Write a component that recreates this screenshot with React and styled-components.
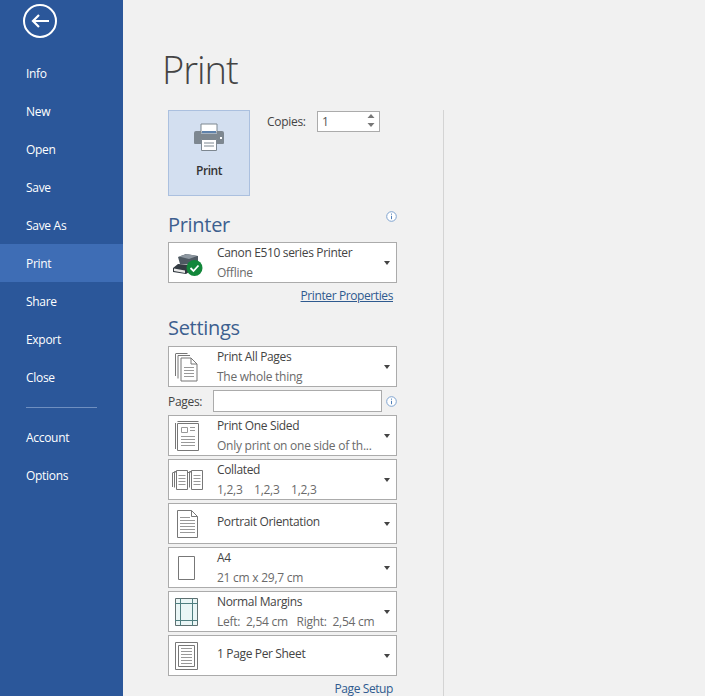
import React from "react";
import styled, { createGlobalStyle } from "styled-components";

const Global = createGlobalStyle`
  html, body { margin: 0; padding: 0; background: #f1f1f1; }
  body { font-family: "Open Sans", "Noto Sans", "Liberation Sans", sans-serif; font-size: 12px; color: #444; }
  * { box-sizing: border-box; }
`;

const Page = styled.div`
  display: flex;
  width: 705px;
  height: 696px;
  overflow: hidden;
  background: #f1f1f1;
`;
const Sidebar = styled.nav`
  width: 123px;
  flex: none;
  background: #2b579a;
  display: flex;
  flex-direction: column;
  padding-top: 3px;
`;
const Back = styled.button`
  width: 36px;
  height: 36px;
  margin: 0 0 15px 22px;
  padding: 0;
  border: 0;
  background: none;
  display: block;
`;
const NavItem = styled.div`
  height: 38px;
  flex: none;
  display: flex;
  align-items: center;
  padding-left: 26px;
  color: #fff;
  font-size: 12px;
  letter-spacing: -0.3px;
  background: ${p => (p.$active ? "#3e6db5" : "transparent")};
`;
const NavRule = styled.hr`
  width: 71px;
  height: 1px;
  border: 0;
  margin: 11px 0 10px 26px;
  background: #6f8fc0;
`;
const Main = styled.main`
  flex: 1;
  padding: 41px 0 0 45px;
  min-width: 0;
`;
const Title = styled.h1`
  margin: 0 0 12px -6px;
  font-family: "Open Sans", sans-serif;
  font-weight: 300;
  font-size: 38px;
  line-height: 57px;
  height: 57px;
  letter-spacing: -1px;
  color: #444;
`;
const Column = styled.div`
  width: 276px;
  height: 590px;
  border-right: 1px solid #d4d4d4;
  padding-right: 46px;
`;
const TopRow = styled.div`
  display: flex;
  align-items: flex-start;
  height: 86px;
`;
const PrintButton = styled.button`
  width: 82px;
  height: 86px;
  flex: none;
  border: 1px solid #abc0df;
  background: #d3dff0;
  display: flex;
  flex-direction: column;
  align-items: center;
  padding: 12px 0 0;
  font: 600 12px "Open Sans", sans-serif;
  letter-spacing: -0.45px;
  color: #333;
  gap: 11px;
`;
const CopiesLabel = styled.label`
  margin: 4px 0 0 17px;
  width: 50px;
  line-height: 16px;
  letter-spacing: -0.3px;
  color: #444;
`;
const Spin = styled.div`
  width: 63px;
  height: 21px;
  margin-top: 1px;
  border: 1px solid #ababab;
  background: #fff;
  display: flex;
  align-items: center;
  justify-content: space-between;
  padding: 0 1px 0 4px;
  color: #555;
`;
const Heading = styled.div`
  display: flex;
  justify-content: space-between;
  align-items: flex-start;
  height: ${p => p.$h}px;
  margin-top: ${p => p.$top}px;
`;
const HeadingText = styled.h2`
  margin: 0;
  font-weight: 400;
  font-size: 20px;
  line-height: 30px;
  letter-spacing: -0.3px;
  color: #3d5f8f;
`;
const Select = styled.div`
  height: 41px;
  margin-bottom: 3px;
  border: 1px solid #ababab;
  background: #fff;
  display: flex;
  align-items: center;
`;
const IconSlot = styled.div`
  width: 48px;
  height: 39px;
  flex: none;
  display: flex;
  align-items: center;
  padding-left: ${p => p.$x}px;
  padding-top: ${p => p.$y || 0}px;
`;
const SelectText = styled.div`
  flex: 1;
  min-width: 0;
  display: flex;
  flex-direction: column;
  gap: 3px;
  margin-top: ${p => (p.$single ? -4 : 0)}px;
`;
const Line = styled.div`
  line-height: 17px;
  white-space: pre;
  letter-spacing: ${p => (p.$sub ? "-0.25px" : "-0.35px")};
  color: ${p => (p.$sub ? "#6a6a6a" : "#444")};
`;
const Caret = styled.span`
  width: 0;
  height: 0;
  flex: none;
  margin-right: 6px;
  border-left: 3.5px solid transparent;
  border-right: 3.5px solid transparent;
  border-top: 4px solid #444;
`;
const LinkRow = styled.div`
  display: flex;
  justify-content: flex-end;
  padding: 1px 4px 0 0;
  height: 18px;
  line-height: 18px;
  letter-spacing: -0.4px;
  color: #2f5a8f;
  text-decoration: ${p => (p.$under ? "underline" : "none")};
`;
const PagesRow = styled.div`
  display: flex;
  align-items: center;
  height: 22px;
  margin-bottom: 3px;
`;
const PagesLabel = styled.label`
  width: 45px;
  flex: none;
  letter-spacing: -0.3px;
  color: #444;
`;
const PagesInput = styled.div`
  width: 169px;
  height: 22px;
  border: 1px solid #ababab;
  background: #fff;
`;
const InfoWrap = styled.span`
  margin-left: 4px;
  margin-top: ${p => p.$top || 0}px;
  display: flex;
`;

const Info = () => (
  <svg width="11" height="11" viewBox="0 0 11 11">
    <circle cx="5.5" cy="5.5" r="4.8" fill="#fff" stroke="#7fa3cf" />
    <path d="M5.5 2.6v1.1M5.5 4.8v3.4" stroke="#4f7fb8" strokeWidth="1" fill="none" />
  </svg>
);
const BackIcon = () => (
  <svg width="36" height="36" viewBox="0 0 36 36">
    <circle cx="18" cy="18" r="16" fill="none" stroke="#fff" strokeWidth="2" />
    <path d="M27 18H11M17 12l-6 6 6 6" fill="none" stroke="#fff" strokeWidth="2.2" />
  </svg>
);
const Printer = () => (
  <svg width="30" height="28" viewBox="0 0 30 28">
    <path d="M7 1h16v9H7z" fill="#fff" stroke="#7d8790" />
    <path d="M8 8h14v2H8z" fill="#5f82ab" />
    <path d="M2 8h5v3h16V8h5a2 2 0 012 2v10a1 1 0 01-1 1H23v-4H7v4H1a1 1 0 01-1-1V10a2 2 0 012-2z" fill="#7d8790" />
    <path d="M7.5 16.5h15v11h-15z" fill="#fff" stroke="#7d8790" />
    <path d="M10 20h10M10 23h10" stroke="#7d8790" />
    <path d="M26 14h2v2h-2z" fill="#fff" />
  </svg>
);
const PrinterCheck = () => (
  <svg width="32" height="26" viewBox="0 0 32 26">
    <path d="M6 4l8-3 12 2v5l-6 3H8z" fill="#4f5a63" />
    <path d="M7 3.5l8-2.500 10 2-8 3z" fill="#8d97a0" />
    <path d="M1 15l5-4 14 1v5l-6 4-13-2z" fill="#333b42" />
    <path d="M2 15.500l11 2v2.500l-11-2z" fill="#e8e8e8" />
    <circle cx="22.500" cy="15" r="8" fill="#12873a" />
    <path d="M18.500 15l3 3 5-5.500" fill="none" stroke="#fff" strokeWidth="1.800" />
  </svg>
);
const doc = "#777";
const Lines = ({ x, y, w, n, step = 3 }) => (
  <path d={Array.from({ length: n }, (_, i) => `M${x} ${y + i * step + 0.5}h${w}`).join("")} stroke="#999" fill="none" />
);
const AllPages = () => (
  <svg width="24" height="29" viewBox="0 0 24 29" fill="none">
    <path d="M.5 1v22M.5.500h12M3 2.500v23M3 2.500h12" stroke={doc} />
    <path d="M6 5.500h10l6 6v17h-16z" transform="translate(0 -.5)" fill="#fff" stroke={doc} />
    <path d="M16 5v6h6" stroke={doc} />
    <Lines x={9} y={14} w={10} n={4} />
  </svg>
);
const OneSided = () => (
  <svg width="24" height="30" viewBox="0 0 24 30" fill="none">
    <path d="M.5 2v26M2.500 .5h21" stroke={doc} />
    <path d="M2.500 2.500h21v27h-21z" fill="#fff" stroke={doc} />
    <path d="M6.500 6.500h6v5h-6z" stroke="#999" />
    <Lines x={15} y={6} w={5} n={2} />
    <Lines x={6} y={15} w={14} n={4} />
  </svg>
);
const CollatedOne = ({ x }) => (
  <g transform={`translate(${x} 0)`}>
    <path d="M.5 3v14M.5 2.500h3M2.500 1.500v16M2.500 1.500h3" stroke={doc} />
    <path d="M4.500 .5h11v19h-11z" fill="#fff" stroke={doc} />
    <Lines x={6.500} y={5} w={7} n={4} />
  </g>
);
const Collated = () => (
  <svg width="32" height="20" viewBox="0 0 32 20" fill="none">
    <CollatedOne x={0} />
    <CollatedOne x={15} />
  </svg>
);
const Portrait = () => (
  <svg width="21" height="28" viewBox="0 0 21 28" fill="none">
    <path d="M.5.500h14l6 6v21h-20z" fill="#fff" stroke={doc} />
    <path d="M14.500.500v6h6" stroke={doc} />
    <Lines x={3} y={7} w={10} n={1} />
    <Lines x={3} y={10} w={15} n={5} />
  </svg>
);
const A4 = () => (
  <svg width="17" height="24" viewBox="0 0 17 24" fill="none">
    <path d="M.5.500h16v23h-16z" fill="#fff" stroke={doc} />
  </svg>
);
const Margins = () => (
  <svg width="23" height="28" viewBox="0 0 23 28" fill="none">
    <path d="M.5.500h22v27h-22z" fill="#eaf6f6" stroke="#5f6f70" />
    <path d="M5.500 0v28M17.500 0v28M0 5.500h23M0 22.500h23" stroke="#4f7f80" />
  </svg>
);
const Sheet = () => (
  <svg width="23" height="28" viewBox="0 0 23 28" fill="none">
    <path d="M.5.500h22v27h-22z" fill="#fff" stroke={doc} />
    <path d="M3.500 3.500h16v21h-16z" stroke={doc} />
    <Lines x={6} y={6} w={11} n={6} />
  </svg>
);
const SpinArrows = () => (
  <svg width="14" height="17" viewBox="0 0 14 17">
    <path d="M3.500 5L7 1l3.500 4zM3.500 10h7L7 14z" fill="#777" />
  </svg>
);

const DropDown = ({ icon, x, y, title, sub }) => (
  <Select>
    <IconSlot $x={x} $y={y}>{icon}</IconSlot>
    <SelectText $single={!sub}>
      <Line>{title}</Line>
      {sub && <Line $sub>{sub}</Line>}
    </SelectText>
    <Caret />
  </Select>
);

const nav = ["Info", "New", "Open", "Save", "Save As", "Print", "Share", "Export", "Close"];

export default function App() {
  return (
    <Page>
      <Global />
      <Sidebar>
        <Back aria-label="Back"><BackIcon /></Back>
        {nav.map(n => <NavItem key={n} $active={n === "Print"}>{n}</NavItem>)}
        <NavRule />
        <NavItem>Account</NavItem>
        <NavItem>Options</NavItem>
      </Sidebar>
      <Main>
        <Title>Print</Title>
        <Column>
          <TopRow>
            <PrintButton><Printer />Print</PrintButton>
            <CopiesLabel>Copies:</CopiesLabel>
            <Spin>1<SpinArrows /></Spin>
          </TopRow>
          <Heading $top={14} $h={32}>
            <HeadingText>Printer</HeadingText>
            <InfoWrap $top={1}><Info /></InfoWrap>
          </Heading>
          <DropDown icon={<PrinterCheck />} x={3} y={7} title="Canon E510 series Printer" sub="Offline" />
          <LinkRow $under>Printer Properties</LinkRow>
          <Heading $top={9} $h={33}>
            <HeadingText>Settings</HeadingText>
          </Heading>
          <DropDown icon={<AllPages />} x={6} y={1} title="Print All Pages" sub="The whole thing" />
          <PagesRow>
            <PagesLabel>Pages:</PagesLabel>
            <PagesInput />
            <InfoWrap><Info /></InfoWrap>
          </PagesRow>
          <DropDown icon={<OneSided />} x={6} title="Print One Sided" sub="Only print on one side of th..." />
          <DropDown icon={<Collated />} x={3} title="Collated" sub="1,2,3    1,2,3    1,2,3" />
          <DropDown icon={<Portrait />} x={8} title="Portrait Orientation" />
          <DropDown icon={<A4 />} x={9} title="A4" sub="21 cm x 29,7 cm" />
          <DropDown icon={<Margins />} x={6} title="Normal Margins" sub="Left:  2,54 cm   Right:  2,54 cm" />
          <DropDown icon={<Sheet />} x={6} title="1 Page Per Sheet" />
          <LinkRow>Page Setup</LinkRow>
        </Column>
      </Main>
    </Page>
  );
}
